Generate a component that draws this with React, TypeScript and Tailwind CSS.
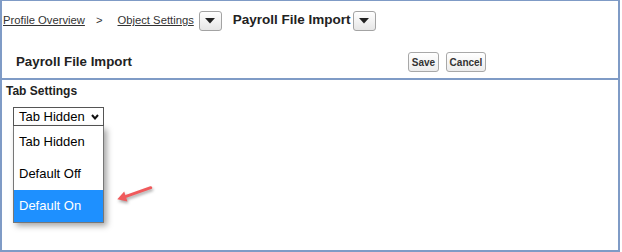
import React from "react";

const font = { fontFamily: "'Liberation Sans', Arial, sans-serif" };

function MenuButton() {
  return (
    <button className="flex h-[20px] w-[23px] items-center justify-center rounded-[3px] border border-[#a3a3a3] bg-gradient-to-b from-white to-[#e6e6e6]">
      <svg width="10" height="6" viewBox="0 0 10 6">
        <polygon points="0,0 10,0 5,5.5" fill="#222" />
      </svg>
    </button>
  );
}

function SmallButton({ label, w }: { label: string; w: string }) {
  return (
    <button
      className={`h-[20px] ${w} rounded-[3px] border border-[#a8a8a8] bg-gradient-to-b from-white to-[#ececec] text-[10px] font-bold text-[#333]`}
    >
      {label}
    </button>
  );
}

export default function App() {
  const options = ["Tab Hidden", "Default Off", "Default On"];

  return (
    <div className="h-[252px] w-[622px] bg-white" style={font}>
      <div className="relative h-[252px] w-[620px] border-x-2 border-b-2 border-t border-[#7f9bc6]">
        {/* Breadcrumb */}
        <div className="flex h-[21px] items-center pl-[1px] pt-[9px] box-content text-[11.25px] text-[#333]">
          <span className="underline">Profile Overview</span>
          <span className="ml-[11px]">&gt;</span>
          <span className="ml-[15px] underline">Object Settings</span>
          <span className="ml-[5px]">
            <MenuButton />
          </span>
          <span className="ml-[11px] text-[13.5px] font-bold text-[#222]">Payroll File Import</span>
          <span className="ml-[2px]">
            <MenuButton />
          </span>
        </div>

        {/* Page header */}
        <div className="mt-[21px] grid grid-cols-[392px_auto] items-center border-b-2 border-[#7f9bc6] pb-[6px] pl-[14px]">
          <h1 className="text-[13.3px] font-bold text-[#222]">Payroll File Import</h1>
          <div className="flex gap-[7px]">
            <SmallButton label="Save" w="w-[31px]" />
            <SmallButton label="Cancel" w="w-[40px]" />
          </div>
        </div>

        {/* Tab settings */}
        <div className="pl-[4px] pt-[4px]">
          <div className="text-[12px] font-bold leading-[14px] text-[#222]">Tab Settings</div>
          <div className="relative ml-[7px] mt-[9px] w-[91px]">
            <div className="flex h-[19px] items-center justify-between border border-[#555] pl-[5px] pr-[4px] text-[13px] text-black">
              <span>Tab Hidden</span>
              <svg width="8" height="6" viewBox="0 0 8 6">
                <polyline points="1,1 4,4.5 7,1" fill="none" stroke="#111" strokeWidth="2" />
              </svg>
            </div>
            <ul className="absolute left-0 top-[19px] w-[91px] border-x border-b border-[#777] bg-white shadow-[3px_3px_6px_rgba(0,0,0,0.35)]">
              {options.map((o) => (
                <li
                  key={o}
                  className={`flex h-[32px] items-center pl-[5px] text-[13px] ${
                    o === "Default On" ? "bg-[#1e90ff] text-white" : "text-black"
                  }`}
                >
                  {o}
                </li>
              ))}
            </ul>
          </div>
        </div>

        {/* Callout arrow */}
        <svg
          className="absolute left-[108px] top-[179px] drop-shadow-[1px_2px_1.5px_rgba(0,0,0,0.35)]"
          width="50"
          height="30"
          viewBox="0 0 50 30"
        >
          <line x1="40.7" y1="7.7" x2="16" y2="16.3" stroke="#f05a5c" strokeWidth="3" strokeLinecap="round" />
          <polygon points="7.3,19.3 17.4,21.4 14.2,11.4" fill="#f05a5c" />
        </svg>
      </div>
    </div>
  );
}
